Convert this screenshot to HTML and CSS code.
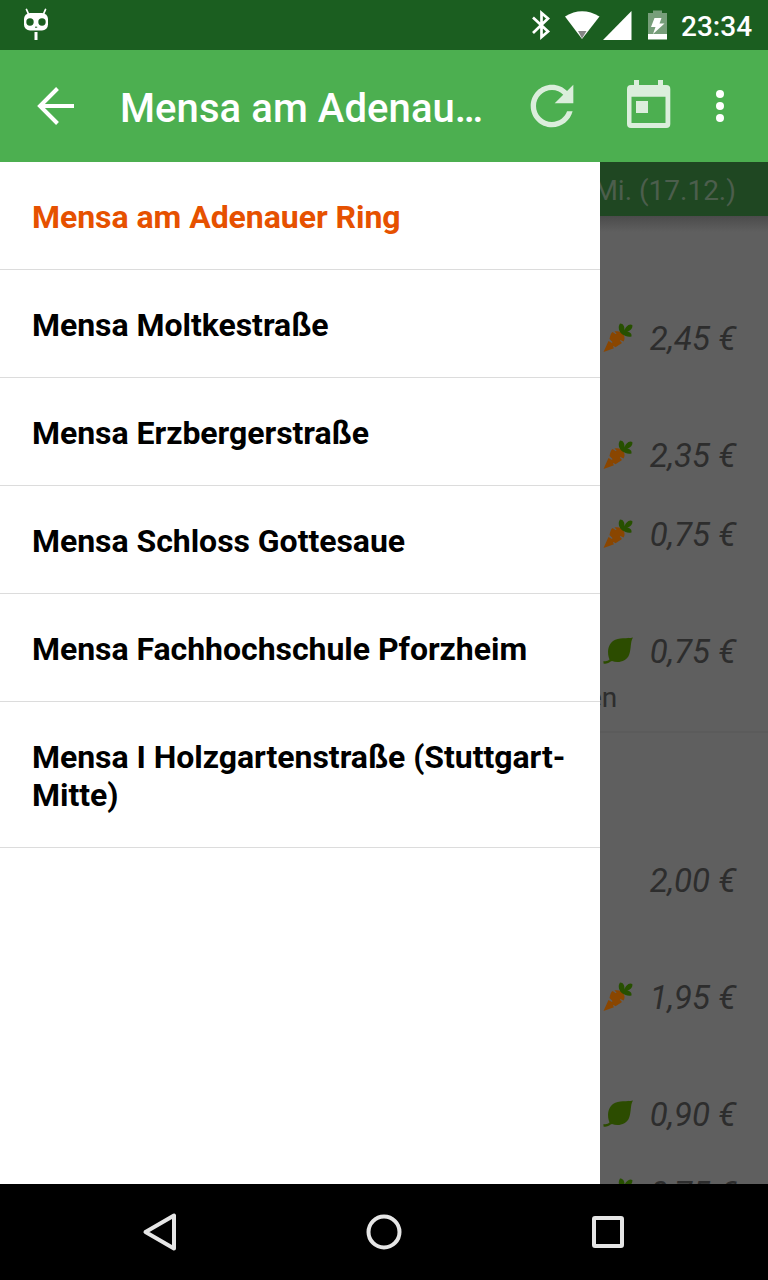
FILE: index.html
```html
<!DOCTYPE html>
<html lang="de">
<head>
<meta charset="utf-8">
<title>Mensa am Adenauer Ring</title>
<link rel="stylesheet" href="styles.css">
</head>
<body>
<svg class="defs" aria-hidden="true">
  <symbol id="carrot" viewBox="0 0 30 30">
    <path fill="#8a4600" d="M0.500 29 5.500 18 9 20 9.500 19 6.500 16C7 13 8 10 9.500 9L13 11.200 13.500 10.500 11.500 8.500C15 7.500 19.500 9 21 12.500C22 15 21.500 17 20.500 18.500L17.500 17 17 17.800 19 20 12.500 24.300 10.500 23 10 23.800 11 25.300Z"/>
    <path fill="#275000" d="M19.500 11.500C16 9 14.500 4 17 0.500C20.500 0.500 22 4 21.300 7.500C22.500 4 26 0 29.300 2C30 5.500 27 8 23.500 9.300C26.500 8.500 29 10.500 28.500 13.500C25 14.500 22 13 19.500 11.500Z"/>
  </symbol>
  <symbol id="leaf" viewBox="0 0 30 30">
    <path fill="#2c4c00" d="M30 1.500C27 6 28.500 13 26 19C23.500 25.500 15 27.500 9 25C7 25.500 5 28.500 0.500 27.500V25C3 25.500 5 25 6.500 23.500C4 17 4.500 9 10 5C16 1 24 3 30 1.500Z"/>
  </symbol>
</svg>
<div class="screen">
  <header class="status">
    <svg class="robot" width="28" height="32" viewBox="0 0 28 32">
      <path d="M4.500 1.500 6.500 6M23.500 1.500 21.500 6" stroke="#fff" stroke-width="1.800" stroke-linecap="round"/>
      <rect x="2" y="5" width="24" height="17.500" rx="6" fill="#fff"/>
      <circle cx="8" cy="14" r="3.700" fill="#1b5e20"/><circle cx="20" cy="14" r="3.700" fill="#1b5e20"/>
      <path d="M13 19.200h2.200" stroke="#1b5e20"/>
      <path d="M14 24v8" stroke="#fff" stroke-width="3"/>
    </svg>
    <svg class="signals" width="138" height="32" viewBox="0 0 138 32">
      <path d="M3 8.500 18 22.500 11.500 28V4L18 9.500 3 24" fill="none" stroke="#fff" stroke-width="2.700"/>
      <path d="M35 7.500Q52-3 69.500 7.500L52 30Z" fill="#fff"/>
      <path d="M48 22h8.500L52 29.500Z" fill="#858585"/>
      <path d="M73 31 101.500 2v29Z" fill="#fff"/>
      <path d="M118 4h5V1.500h9V4h5v21h-19Z" fill="#779e7a"/>
      <path d="M118 25h19v5.500h-19Z" fill="#fff"/>
      <path d="M124.500 9h7l-2 5.500h5L123 25l2.500-7H121Z" fill="#fff"/>
    </svg>
    <span class="time">23:34</span>
  </header>
  <div class="appbar">
    <svg class="back" width="40" height="40" viewBox="0 0 40 40"><path d="M21.500 2.500 4 20 21.500 37.500M4 20H38" fill="none" stroke="#fff" stroke-width="4"/></svg>
    <h1 class="title">Mensa am Adenau…</h1>
    <svg class="refresh" width="64" height="64" viewBox="0 0 24 24"><path fill="#dbeedc" d="M17.650 6.350C16.200 4.900 14.210 4 12 4c-4.420 0-7.990 3.580-7.990 8s3.570 8 7.990 8c3.730 0 6.840-2.550 7.730-6h-2.080c-.82 2.330-3.040 4-5.650 4-3.310 0-6-2.690-6-6s2.690-6 6-6c1.660 0 3.140.69 4.220 1.780L13 11h7V4l-2.350 2.350z"/></svg>
    <svg class="calendar" width="44" height="48" viewBox="0 0 44 48"><path fill="#dbeedc" fill-rule="evenodd" d="M4 5H7V0H12V5H31V0H36V5H39.300Q43.300 5 43.300 9V44Q43.300 48 39.300 48H4Q0 48 0 44V9Q0 5 4 5ZM4.500 16.700V43H38.500V16.700ZM9 21H21V33H9Z"/></svg>
    <svg class="more" width="8" height="32" viewBox="0 0 8 32" fill="#fff"><circle cx="4" cy="4" r="4"/><circle cx="4" cy="16" r="4"/><circle cx="4" cy="28" r="4"/></svg>
  </div>
  <main class="main">
    <nav class="drawer">
      <a class="item active">Mensa am Adenauer Ring</a>
      <a class="item">Mensa Moltkestraße</a>
      <a class="item">Mensa Erzbergerstraße</a>
      <a class="item">Mensa Schloss Gottesaue</a>
      <a class="item">Mensa Fachhochschule Pforzheim</a>
      <a class="item">Mensa I Holzgartenstraße (Stuttgart-Mitte)</a>
    </nav>
    <section class="menu">
      <div class="tab">Mi. (17.12.)</div>
      <div class="list">
        <div class="row first"><svg class="icon"><use href="#carrot"/></svg><span>2,45 €</span></div>
        <div class="row wide"><svg class="icon"><use href="#carrot"/></svg><span>2,35 €</span></div>
        <div class="row"><svg class="icon"><use href="#carrot"/></svg><span>0,75 €</span></div>
        <div class="row wide"><svg class="icon"><use href="#leaf"/></svg><span>0,75 €</span></div>
        <div class="note">en</div>
        <div class="row section"><span>2,00 €</span></div>
        <div class="row wide"><svg class="icon"><use href="#carrot"/></svg><span>1,95 €</span></div>
        <div class="row wide"><svg class="icon"><use href="#leaf"/></svg><span>0,90 €</span></div>
        <div class="row"><svg class="icon"><use href="#carrot"/></svg><span>0,75 €</span></div>
      </div>
    </section>
  </main>
  <footer class="navbar">
    <svg width="36" height="40" viewBox="0 0 36 40"><path d="M32 3.500V36.500L3.500 20Z" fill="none" stroke="#e6e6e6" stroke-width="4" stroke-linejoin="round"/></svg>
    <svg width="36" height="36" viewBox="0 0 36 36"><circle cx="18" cy="18" r="15.500" fill="none" stroke="#e6e6e6" stroke-width="4"/></svg>
    <svg width="36" height="36" viewBox="0 0 36 36"><rect x="4" y="4" width="28" height="28" rx="1" fill="none" stroke="#e6e6e6" stroke-width="4"/></svg>
  </footer>
</div>
</body>
</html>
```
FILE: styles.css
```css
* { box-sizing: border-box; }
body { margin: 0; font-family: Roboto, sans-serif; }
svg { display: block; flex: none; }
.defs { display: none; }
.screen { width: 768px; height: 1280px; display: flex; flex-direction: column; overflow: hidden; }
.status { height: 50px; flex: none; background: #1b5e20; display: flex; align-items: flex-start; padding: 9px 16px 0 22px; }
.robot { margin-top: -1px; }
.signals { margin-left: auto; }
.time { color: #fff; font-size: 28px; font-weight: 500; line-height: 36px; width: 71px; margin-left: 13px; white-space: nowrap; }
.appbar { height: 112px; flex: none; background: #4caf50; display: flex; align-items: center; padding: 0 44px 0 36px; }
.title { margin: 6px 0 0 44px; width: 366px; color: #fff; font-size: 40px; font-weight: 500; line-height: 48px; letter-spacing: 0.08px; white-space: nowrap; }
.refresh { margin-left: 34px; }
.calendar { margin: -4px 0 0 43px; }
.more { margin-left: 45px; }
.main { flex: 1; min-height: 0; display: flex; background: #5f5f5f; }
.drawer { width: 600px; flex: none; background: #fff; }
.item { display: block; padding: 36px 32px 33px; border-bottom: 1px solid #dcdcdc; color: #000; font-size: 32px; font-weight: 700; line-height: 38px; letter-spacing: -0.04px; }
.item.active { color: #e65100; }
.menu { flex: 1; min-width: 0; display: flex; flex-direction: column; overflow: hidden; color: #2d2d2d; }
.tab { height: 54px; flex: none; background: #1f4722; color: #4c5e4d; font-size: 28px; line-height: 58px; display: flex; justify-content: flex-end; padding-right: 32px; white-space: nowrap; }
.list { flex: 1; min-height: 0; overflow: hidden; background: linear-gradient(#4b4b4b, #5f5f5f 16px); }
.row { height: 40px; margin-top: 39px; display: flex; justify-content: flex-end; padding-right: 32px; font-size: 33px; font-style: italic; line-height: 40px; white-space: nowrap; }
.row.first { margin-top: 0; padding-top: 103px; height: 143px; }
.row.wide { margin-top: 77px; }
.row.section { margin-top: 128px; }
.icon { width: 30px; height: 30px; margin: 4px 17px 0 0; }
.note { height: 55px; margin-top: 6px; border-bottom: 2px solid #5b5b5b; font-size: 28px; line-height: 40px; text-indent: -13px; }
.navbar { height: 96px; flex: none; background: #000; display: flex; align-items: center; justify-content: space-between; padding: 0 142px; }
```
